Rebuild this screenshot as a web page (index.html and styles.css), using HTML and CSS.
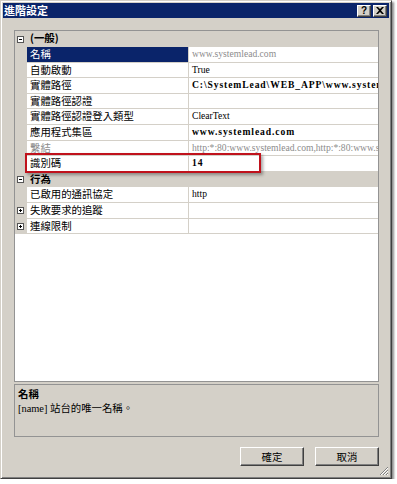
FILE: index.html
```html
<!DOCTYPE html>
<html lang="zh-Hant">
<head>
	<meta charset="UTF-8">
	<title>進階設定</title>
	<link rel="stylesheet" href="styles.css">
</head>
<body>
	<div class="window">
		<div class="titlebar">
			<span class="title">進階設定</span>
			<div class="capBtns">
				<span class="capBtn">?</span>
				<span class="capBtn">
					<svg width="8" height="7" viewBox="0 0 8 7"><path d="M0 0h2l2 2 2-2h2L5 3.5 8 7H6L4 5 2 7H0l3-3.5z" fill="#000"/></svg>
				</span>
			</div>
		</div>
		<div class="content">
			<div class="grid">
				<div class="row category">
					<span class="gutter"><svg class="box" width="7" height="7" viewBox="0 0 7 7"><rect x=".5" y=".5" width="6" height="6" fill="#fff" stroke="#555"/><path d="M2 3.5h3" stroke="#000"/></svg></span>
					<span class="catLabel">(一般)</span>
				</div>
				<div class="row selected">
					<span class="gutter"></span>
					<span class="name">名稱</span>
					<span class="value dim">www.systemlead.com</span>
				</div>
				<div class="row">
					<span class="gutter"></span>
					<span class="name">自動啟動</span>
					<span class="value">True</span>
				</div>
				<div class="row">
					<span class="gutter"></span>
					<span class="name">實體路徑</span>
					<span class="value bold">C:\SystemLead\WEB_APP\www.systemlead.com</span>
				</div>
				<div class="row">
					<span class="gutter"></span>
					<span class="name">實體路徑認證</span>
					<span class="value"></span>
				</div>
				<div class="row">
					<span class="gutter"></span>
					<span class="name">實體路徑認證登入類型</span>
					<span class="value">ClearText</span>
				</div>
				<div class="row">
					<span class="gutter"></span>
					<span class="name">應用程式集區</span>
					<span class="value bold">www.systemlead.com</span>
				</div>
				<div class="row">
					<span class="gutter"></span>
					<span class="name dim">繫結</span>
					<span class="value dim">http:*:80:www.systemlead.com,http:*:80:www.systemlead.com.tw</span>
				</div>
				<div class="row">
					<span class="gutter"></span>
					<span class="name">識別碼</span>
					<span class="value bold">14</span>
				</div>
				<div class="row category">
					<span class="gutter"><svg class="box" width="7" height="7" viewBox="0 0 7 7"><rect x=".5" y=".5" width="6" height="6" fill="#fff" stroke="#555"/><path d="M2 3.5h3" stroke="#000"/></svg></span>
					<span class="catLabel">行為</span>
				</div>
				<div class="row">
					<span class="gutter"></span>
					<span class="name">已啟用的通訊協定</span>
					<span class="value">http</span>
				</div>
				<div class="row">
					<span class="gutter"><svg class="box" width="7" height="7" viewBox="0 0 7 7"><rect x=".5" y=".5" width="6" height="6" fill="#fff" stroke="#555"/><path d="M2 3.5h3M3.5 2v3" stroke="#000"/></svg></span>
					<span class="name">失敗要求的追蹤</span>
					<span class="value"></span>
				</div>
				<div class="row">
					<span class="gutter"><svg class="box" width="7" height="7" viewBox="0 0 7 7"><rect x=".5" y=".5" width="6" height="6" fill="#fff" stroke="#555"/><path d="M2 3.5h3M3.5 2v3" stroke="#000"/></svg></span>
					<span class="name">連線限制</span>
					<span class="value"></span>
				</div>
				<div class="highlight"></div>
			</div>
			<div class="desc">
				<div class="descTitle">名稱</div>
				<div class="descText">[name] 站台的唯一名稱。</div>
			</div>
			<div class="actions">
				<button type="button" class="btn">確定</button>
				<button type="button" class="btn">取消</button>
			</div>
		</div>
		<svg class="grip" width="10" height="10" viewBox="0 0 10 10">
			<path d="M9 1L1 9M9 4L4 9M9 7L7 9" stroke="#808080"/>
			<path d="M9 2L2 9M9 5L5 9M9 8L8 9" stroke="#fff"/>
		</svg>
	</div>
</body>
</html>
```

FILE: styles.css
```css
body{
	margin: 0;
	background-color: #fff;
	font-family: "Liberation Serif", "Noto Sans CJK TC", serif;
	font-size: 10.4px;
	color: #000;
}
.window{
	width: 392px;
	height: 479px;
	box-sizing: border-box;
	position: relative;
	display: flex;
	flex-direction: column;
	padding: 2px;
	background-color: #d4d0c8;
	border: 1px solid;
	border-color: #d4d0c8 #404040 #404040 #d4d0c8;
	box-shadow: inset 1px 1px #fff, inset -1px -1px #808080, 2px 2px 2px rgba(0,0,0,.45);
}
.titlebar{
	height: 15px;
	display: flex;
	align-items: center;
	justify-content: space-between;
	background-color: #0a246a;
	padding: 0 2px 0 1px;
}
.title{
	color: #fff;
	font-family: "Noto Sans CJK TC", sans-serif;
	font-weight: bold;
	font-size: 11px;
	line-height: 15px;
}
.capBtns{
	display: flex;
	gap: 2px;
}
.capBtn{
	width: 14px;
	height: 12px;
	box-sizing: border-box;
	display: flex;
	align-items: center;
	justify-content: center;
	background-color: #d4d0c8;
	border: 1px solid;
	border-color: #fff #404040 #404040 #fff;
	box-shadow: inset -1px -1px #808080;
	font-family: "Liberation Sans", sans-serif;
	font-weight: bold;
	font-size: 10px;
	line-height: 10px;
}
.content{
	flex: 1;
	display: flex;
	flex-direction: column;
	padding: 12px 10px 10px 11px;
}
.grid{
	height: 352px;
	box-sizing: border-box;
	position: relative;
	background-color: #fff;
	border: 1px solid #939393;
	padding-top: .4px;
}
.row{
	height: 15.6px;
	display: grid;
	grid-template-columns: 12px 162px 1fr;
	line-height: 14.6px;
}
.gutter{
	background-color: #d4d0c8;
	display: flex;
	align-items: center;
	padding-left: 2px;
}
.box{
	display: block;
}
.name{
	box-sizing: border-box;
	padding-left: 3px;
	border-right: 1px solid #d4d0c8;
	border-bottom: 1px solid #d4d0c8;
	font-family: "Noto Sans CJK TC", sans-serif;
	white-space: nowrap;
	overflow: hidden;
}
.value{
	box-sizing: border-box;
	padding-left: 3px;
	border-bottom: 1px solid #d4d0c8;
	font-size: 9.6px;
	white-space: nowrap;
	overflow: hidden;
}
.value.bold{
	font-weight: bold;
	letter-spacing: .9px;
}
.dim{
	color: #8c8c8c;
}
.selected .name{
	background-color: #0a246a;
	color: #fff;
}
.category{
	background-color: #d4d0c8;
}
.catLabel{
	grid-column: 2 / 4;
	padding-left: 3px;
	font-family: "Noto Sans CJK TC", sans-serif;
	font-weight: bold;
}
.highlight{
	position: absolute;
	left: 10px;
	top: 122px;
	width: 236px;
	height: 20px;
	box-sizing: border-box;
	border: 2px solid #c0121c;
	box-shadow: 2px 2px 3px rgba(0,0,0,.35);
}
.desc{
	height: 53px;
	box-sizing: border-box;
	margin-top: 2px;
	padding: 1px 3px;
	border: 1px solid #939393;
	line-height: 15px;
}
.descTitle{
	font-family: "Noto Sans CJK TC", sans-serif;
	font-weight: bold;
}
.actions{
	display: flex;
	justify-content: flex-end;
	gap: 11px;
	margin-top: 10px;
}
.btn{
	width: 64px;
	height: 19px;
	box-sizing: border-box;
	padding: 0;
	background-color: #d4d0c8;
	border: 1px solid;
	border-color: #fff #404040 #404040 #fff;
	box-shadow: inset -1px -1px #808080;
	font-family: "Noto Sans CJK TC", sans-serif;
	font-size: 10.4px;
	color: #000;
}
.grip{
	position: absolute;
	right: 2px;
	bottom: 2px;
}
```
